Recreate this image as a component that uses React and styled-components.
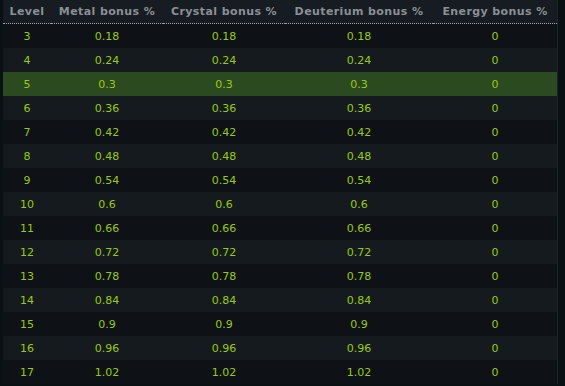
import React from 'react';
import styled, { createGlobalStyle } from 'styled-components';

const GlobalStyle = createGlobalStyle`
	body {
		margin: 0;
		background: #0a1115;
	}
`;

const levels = [3, 4, 5, 6, 7, 8, 9, 10, 11, 12, 13, 14, 15, 16, 17];
const current = 5;

const fmt = (n) => String(Math.round(n * 100) / 100);

export default function App() {
	return (
		<>
			<GlobalStyle />
			<Panel>
				<Table>
					<colgroup>
						<col style={{ width: 48 }} />
						<col style={{ width: 112 }} />
						<col style={{ width: 122 }} />
						<col style={{ width: 148 }} />
						<col style={{ width: 124 }} />
					</colgroup>
					<thead>
						<tr>
							<Head>Level</Head>
							<Head>Metal bonus %</Head>
							<Head>Crystal bonus %</Head>
							<Head>Deuterium bonus %</Head>
							<Head>Energy bonus %</Head>
						</tr>
					</thead>
					<tbody>
						{levels.map((lvl, i) => {
							const bonus = fmt(lvl * 0.06);
							return (
								<Row key={lvl} $odd={i % 2 === 1} $active={lvl === current}>
									<Cell>{lvl}</Cell>
									<Cell>{bonus}</Cell>
									<Cell>{bonus}</Cell>
									<Cell>{bonus}</Cell>
									<Cell>0</Cell>
								</Row>
							);
						})}
					</tbody>
				</Table>
			</Panel>
		</>
	);
}

const Panel = styled.div`
	width: 554px;
	padding-left: 3px;
	border-right: 1px solid #1c2227;
`;

const Table = styled.table`
	width: 554px;
	table-layout: fixed;
	border-collapse: collapse;
	font-family: 'DejaVu Sans', Verdana, sans-serif;
	font-size: 11px;
`;

const Head = styled.th`
	height: 23px;
	padding: 0;
	background: #161c21;
	color: #8a8f95;
	font-weight: bold;
	letter-spacing: 0.4px;
	text-align: center;
	border-bottom: 1px dotted #9aa0a6;
	white-space: nowrap;
`;

const Row = styled.tr`
	background: ${(p) => (p.$active ? '#2c4a20' : p.$odd ? '#151a1e' : '#0e1115')};
`;

const Cell = styled.td`
	height: 24px;
	padding: 0;
	color: #99cc00;
	text-align: center;
`;
